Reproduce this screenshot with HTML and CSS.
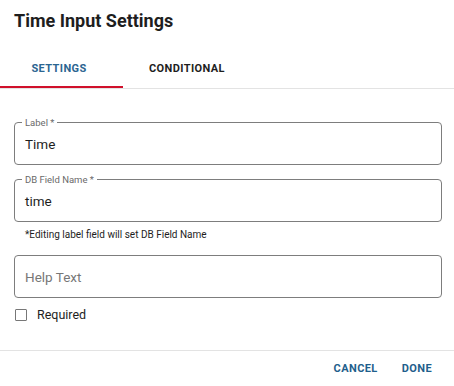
FILE: index.html
```html
<!DOCTYPE html>
<html lang="en">
<head>
  <meta charset="UTF-8">
  <title>Time Input Settings</title>
  <link rel="stylesheet" href="styles.css">
</head>
<body>
  <div class="dialog">
    <div class="dialog-title">Time Input Settings</div>

    <div class="tabs">
      <div class="tab active">SETTINGS</div>
      <div class="tab">CONDITIONAL</div>
    </div>

    <div class="dialog-content">
      <div class="field">
        <span class="field-label">Label *</span>
        <div class="field-value">Time</div>
      </div>

      <div class="field field-db">
        <span class="field-label">DB Field Name *</span>
        <div class="field-value">time</div>
      </div>
      <div class="helper">*Editing label field will set DB Field Name</div>

      <div class="field field-help">
        <div class="field-value placeholder">Help Text</div>
      </div>

      <label class="check-row">
        <span class="checkbox"></span>
        <span>Required</span>
      </label>
    </div>

    <div class="dialog-actions">
      <button class="btn">CANCEL</button>
      <button class="btn">DONE</button>
    </div>
  </div>
</body>
</html>
```

FILE: styles.css
```css
body {
  margin: 0;
  font-family: Roboto, "Liberation Sans", Arial, sans-serif;
  background: #fff;
  color: #222;
}
.dialog {
  width: 454px;
  height: 386px;
  display: flex;
  flex-direction: column;
}
.dialog-title {
  padding: 9px 14px 15px;
  font-size: 18px;
  font-weight: 700;
  line-height: 24px;
  color: #1e1e1e;
}
.tabs {
  display: flex;
  height: 40px;
  border-bottom: 1px solid #e3e3e3;
}
.tab {
  width: 128px;
  display: flex;
  align-items: center;
  justify-content: center;
  font-size: 11px;
  font-weight: 700;
  letter-spacing: 0.4px;
  color: #1e1e1e;
  box-sizing: border-box;
  padding-top: 1px;
}
.tab.active {
  width: 123px;
  padding-right: 5px;
  color: #2b6591;
  border-bottom: 2px solid #d0102b;
  padding-top: 2px;
}
.dialog-content {
  padding: 33px 12px 0 14px;
  flex: 1;
}
.field {
  position: relative;
  height: 43px;
  border: 1px solid #7d7d7d;
  border-radius: 4px;
  box-sizing: border-box;
  display: flex;
  align-items: center;
  padding: 0 10px;
}
.field-label {
  position: absolute;
  top: -6px;
  left: 7px;
  padding: 0 3px;
  background: #fff;
  font-size: 9.5px;
  line-height: 11px;
  color: #6a6a6a;
}
.field-value {
  font-size: 13.5px;
  color: #1e1e1e;
}
.field-value.placeholder {
  color: #777;
  font-size: 13.5px;
}
.field-db {
  margin-top: 14px;
}
.helper {
  font-size: 10px;
  line-height: 12px;
  padding: 7px 0 0 11px;
  color: #1e1e1e;
}
.field-help {
  margin-top: 14px;
}
.check-row {
  display: flex;
  align-items: center;
  gap: 10px;
  margin-top: 9px;
  font-size: 12.5px;
  color: #1e1e1e;
}
.checkbox {
  width: 10px;
  height: 10px;
  border: 1px solid #777;
  border-radius: 1px;
  margin-left: 1px;
}
.dialog-actions {
  border-top: 1px solid #e3e3e3;
  height: 35px;
  display: flex;
  justify-content: flex-end;
  align-items: center;
  gap: 8px;
  padding-right: 14px;
}
.btn {
  background: none;
  border: none;
  padding: 4px 8px;
  font-family: inherit;
  font-size: 11px;
  font-weight: 700;
  letter-spacing: 0.4px;
  color: #1f5f8c;
  cursor: pointer;
}
```
